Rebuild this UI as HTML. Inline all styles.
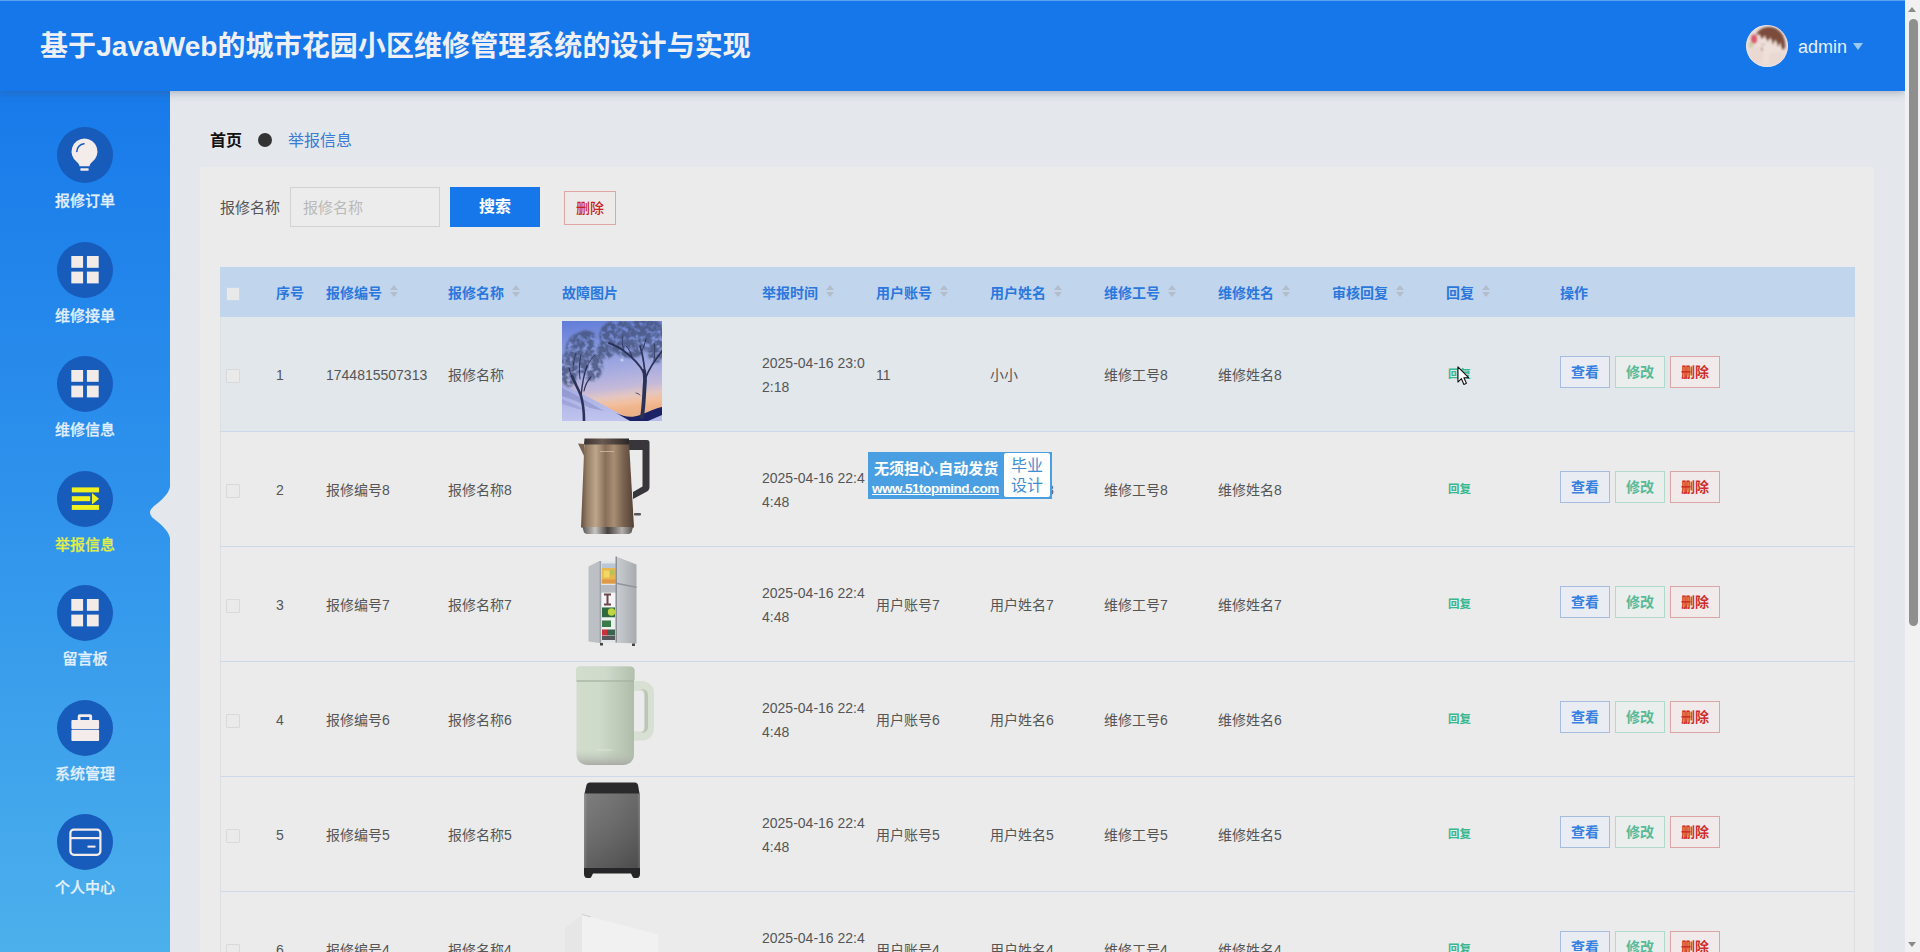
<!DOCTYPE html>
<html lang="zh-CN">
<head>
<meta charset="utf-8">
<title>基于JavaWeb的城市花园小区维修管理系统的设计与实现</title>
<style>
*{box-sizing:border-box;margin:0;padding:0}
html,body{width:1920px;height:952px;overflow:hidden}
body{position:relative;background:#e4e8ed;font-family:"Liberation Sans","Noto Sans CJK SC",sans-serif;color:#555;font-size:14px}
.abs{position:absolute}
#hdr{position:absolute;left:0;top:0;width:1905px;height:91px;background:#1677ea;box-shadow:0 2px 8px rgba(60,80,110,.35),inset 0 1px 0 #5a9ff0;z-index:5}
#hdr .title{position:absolute;left:40px;top:28px;font-size:28px;line-height:38px;font-weight:700;color:#eef0f6;white-space:nowrap;letter-spacing:.070px}
#hdr .avatar{position:absolute;left:1746px;top:25px;width:42px;height:42px;border-radius:50%;overflow:hidden}
#hdr .avatar svg{display:block}
#hdr .uname{position:absolute;left:1798px;top:34px;font-size:18px;line-height:26px;color:#e6f0ff}
#hdr .caret{position:absolute;left:1853px;top:43px;width:0;height:0;border-left:5px solid transparent;border-right:5px solid transparent;border-top:7px solid #9cc8f8}
#side{position:absolute;left:0;top:90px;width:170px;height:862px;background:linear-gradient(180deg,#187aea 0%,#3094ec 50%,#4cb0ec 100%);z-index:2}
.mi{position:absolute;left:0;width:170px;height:114px;text-align:center}
.mi .ic{position:absolute;left:57px;top:0;width:56px;height:56px;border-radius:50%;background:#175bbb}
.mi .ic svg{position:absolute;left:0;top:0}
.mi .lb{position:absolute;left:0;width:170px;top:63px;font-size:15px;line-height:22px;color:#e2f0fe;font-weight:500;-webkit-text-stroke:.250px #e2f0fe}
.mi.act .lb{color:#e2ee48;-webkit-text-stroke-color:#e2ee48}
#side .notch{position:absolute;left:146px;top:397px}
#sb{position:absolute;left:1905px;top:0;width:15px;height:952px;background:#f1f1f1;z-index:9}
#sb .th{position:absolute;left:3.500px;top:19px;width:9px;height:607px;background:#8f8f8f;border-radius:4.500px}
#sb .up{position:absolute;left:3px;top:7px;width:0;height:0;border-left:4.500px solid transparent;border-right:4.500px solid transparent;border-bottom:5px solid #8a8a8a}
#sb .dn{position:absolute;left:3px;top:942px;width:0;height:0;border-left:4.500px solid transparent;border-right:4.500px solid transparent;border-top:5px solid #8a8a8a}
.bc{position:absolute;top:129px;font-size:16px;line-height:24px;white-space:nowrap}
#panel{position:absolute;left:200px;top:167px;width:1674px;height:800px;background:#ebebeb}
.flabel{position:absolute;left:20px;top:29px;font-size:15px;line-height:24px;color:#555}
.finput{position:absolute;left:90px;top:20px;width:150px;height:40px;border:1px solid #d2d2d2;background:#ececec}
.finput span{position:absolute;left:12px;top:8px;font-size:15px;line-height:24px;color:#b9b9b9}
.fsearch{position:absolute;left:250px;top:20px;width:90px;height:40px;background:#1677ea;color:#fff;font-size:16px;font-weight:700;text-align:center;line-height:40px}
.fdel{position:absolute;left:364px;top:24px;width:52px;height:34px;border:1px solid #e0a6a6;background:#efeaea;color:#c81e1e;font-size:14px;font-weight:500;text-align:center;line-height:32px}
.thead{position:absolute;left:20px;top:100px;width:1635px;height:50px;background:#c1d5ed}
.thead .th{position:absolute;top:1px;line-height:50px;font-size:14px;font-weight:700;color:#2b78dd;white-space:nowrap}
.sc{position:relative;display:inline-block;width:10px;height:14px;margin-left:8px;vertical-align:middle;top:-3px}
.sc b{position:absolute;left:0;width:0;height:0;border-left:4.500px solid transparent;border-right:4.500px solid transparent}
.sc .u{top:1px;border-bottom:5px solid #b4bdca}
.sc .d{top:8px;border-top:5px solid #b4bdca}
.cb{position:absolute;width:14px;height:14px;border:1px solid #d9d9d9;background:#eaeaea;border-radius:1px}
.hcb{border-color:#c6d8ee;background:#e9e9e9}
.tr{position:absolute;left:20px;width:1635px;height:115px;border-bottom:1px solid #cdd8e8;box-shadow:inset 1px 0 0 #dedfe2,inset -1px 0 0 #dedfe2;background:#ebebeb}
.tr.hov{background:#e2e7ec}
.td{position:absolute;top:1px;height:114px;line-height:114px;font-size:14px;color:#555;white-space:nowrap}
.td.t2{line-height:24px;padding-top:33px}
.pic{position:absolute;left:342px;top:4px;width:100px;height:100px}
.pic svg{display:block}
.rp{position:absolute;left:1228px;top:48px;font-size:11.500px;line-height:18px;color:#3ab78e;font-weight:700}
.ob{position:absolute;top:39px;width:50px;height:32px;border:1px solid;font-size:14px;font-weight:700;text-align:center;line-height:30px}
.b1{left:1340px;color:#3780e0;border-color:#a6bcde;background:#e9ecf2}
.b2{left:1395px;color:#57ba99;border-color:#b3d9ca;background:#eaeeec}
.b3{left:1450px;color:#cf2e2e;border-color:#dba5a5;background:#f0eaea}
#wm{position:absolute;left:868px;top:452px;width:184px;height:47px;background:#4a9fe2;z-index:20;color:#fff;font-weight:700}
#wm .l1{position:absolute;left:6px;top:6.500px;font-size:15px;line-height:20px;white-space:nowrap}
#wm .l2{position:absolute;left:4px;top:27.500px;font-size:13.500px;letter-spacing:-0.450px;line-height:18px;white-space:nowrap;text-decoration:underline}
#wm .wb{position:absolute;left:136px;top:1px;width:46px;height:44px;background:#fff;border-radius:2px;color:#3f8ecf;font-weight:400;font-size:16px;line-height:20.500px;text-align:center;padding-top:2.500px}
#cur{position:absolute;left:1456.500px;top:366px;z-index:30}
</style>
</head>
<body>
<div id="hdr">
  <div class="title">基于JavaWeb的城市花园小区维修管理系统的设计与实现</div>
  <div class="avatar"><svg width="42" height="42" viewBox="0 0 42 42"><defs><filter id="ab" x="-20%" y="-20%" width="140%" height="140%"><feGaussianBlur stdDeviation="0.900"/></filter></defs><rect width="42" height="42" fill="#ecdcd8"/><g filter="url(#ab)"><ellipse cx="22" cy="27" rx="13" ry="12" fill="#efe0da"/><ellipse cx="11" cy="31" rx="7" ry="9" fill="#ecd8d2"/><ellipse cx="31" cy="34" rx="9" ry="7" fill="#ead8d2"/><path d="M10 10C13 2 24 0 31 4C37 8 40 15 39 23L36 25L34.500 17L32 22L29.500 14L27 20L24.500 12L21.500 17L19 10L16 14L13.500 9Z" fill="#7c4c3a"/><ellipse cx="8" cy="14" rx="3" ry="4.500" fill="#d9566a"/><ellipse cx="5" cy="20" rx="2" ry="3" fill="#b8c48a" opacity=".7"/><path d="M15.500 22l.8 4" stroke="#8a7a7a" stroke-width="1.200"/><path d="M15 19.500h4" stroke="#9a8a88" stroke-width=".8"/></g><circle cx="21" cy="21" r="20.600" fill="none" stroke="#e8eefc" stroke-width=".8" opacity=".7"/></svg>
</div>
  <div class="uname">admin</div>
  <div class="caret"></div>
</div>
<div id="side">
  <div class="mi" style="top:37.0px"><div class="ic"><svg width="56" height="56" viewBox="0 0 56 56"><path d="M27.5 11.5a13 13 0 0 0-7.6 23.5c1.6 1.3 2.3 2.6 2.6 4.2h10c.3-1.600 1-2.900 2.600-4.200A13 13 0 0 0 27.500 11.500z" fill="#f3ecea"/><rect x="23.300" y="41.200" width="8.400" height="2.500" rx=".8" fill="#f3ecea"/><path d="M19.800 24.500a8 8 0 0 1 7.200-7.700" fill="none" stroke="#175bbb" stroke-width="1.600" stroke-linecap="round"/></svg></div><div class="lb">报修订单</div></div>
  <div class="mi" style="top:151.5px"><div class="ic"><svg width="56" height="56" viewBox="0 0 56 56"><g fill="#f3ebe8"><rect x="14.300" y="14" width="11.800" height="11.800"/><rect x="29.900" y="14" width="11.800" height="11.800"/><rect x="14.300" y="29.600" width="11.800" height="11.800"/><rect x="29.900" y="29.600" width="11.800" height="11.800"/></g></svg></div><div class="lb">维修接单</div></div>
  <div class="mi" style="top:266.0px"><div class="ic"><svg width="56" height="56" viewBox="0 0 56 56"><g fill="#f3ebe8"><rect x="14.300" y="14" width="11.800" height="11.800"/><rect x="29.900" y="14" width="11.800" height="11.800"/><rect x="14.300" y="29.600" width="11.800" height="11.800"/><rect x="29.900" y="29.600" width="11.800" height="11.800"/></g></svg></div><div class="lb">维修信息</div></div>
  <div class="mi act" style="top:380.5px"><div class="ic"><svg width="56" height="56" viewBox="0 0 56 56"><g fill="#f0f01e"><rect x="14.800" y="16.400" width="27.300" height="5"/><rect x="14.800" y="25.200" width="18.400" height="5"/><rect x="14.800" y="34" width="27.300" height="4.900"/><path d="M35 22L42 27.700L35 33.400z"/></g></svg></div><div class="lb">举报信息</div></div>
  <div class="mi" style="top:495.0px"><div class="ic"><svg width="56" height="56" viewBox="0 0 56 56"><g fill="#f3ebe8"><rect x="14.300" y="14" width="11.800" height="11.800"/><rect x="29.900" y="14" width="11.800" height="11.800"/><rect x="14.300" y="29.600" width="11.800" height="11.800"/><rect x="29.900" y="29.600" width="11.800" height="11.800"/></g></svg></div><div class="lb">留言板</div></div>
  <div class="mi" style="top:609.5px"><div class="ic"><svg width="56" height="56" viewBox="0 0 56 56"><path d="M20.700 20.500v-4.200a2 2 0 0 1 2-2h10.400a2 2 0 0 1 2 2v4.200h-2.800v-3.400h-8.800v3.400z" fill="#f3ecea"/><rect x="14.400" y="20" width="27.700" height="8.900" rx="1" fill="#f3ecea"/><rect x="14.400" y="29.800" width="27.700" height="11.200" rx="1" fill="#f3ecea"/></svg></div><div class="lb">系统管理</div></div>
  <div class="mi" style="top:724.0px"><div class="ic"><svg width="56" height="56" viewBox="0 0 56 56"><rect x="13.400" y="15.600" width="30" height="25.200" rx="3.500" fill="none" stroke="#f3ecea" stroke-width="2.200"/><rect x="13.400" y="23" width="30" height="2.200" fill="#f3ecea"/><rect x="30.500" y="31.600" width="8" height="2" fill="#f3ecea"/></svg></div><div class="lb">个人中心</div></div>
  <svg class="notch" width="24" height="51" viewBox="0 0 24 51"><path d="M24 0C22.500 6.500 18 10.500 12.500 15.500C9 18.500 4 21.500 4 25.500C4 29.500 9 32.500 12.500 35.500C18 40.500 22.500 44.500 24 51z" fill="#e4e8ed"/></svg>
</div>
<div id="sb"><div class="up"></div><div class="th"></div><div class="dn"></div></div>
<div class="bc" style="left:210px;font-weight:700;color:#111">首页</div>
<div class="abs" style="left:258px;top:133px;width:14px;height:14px;border-radius:50%;background:#333"></div>
<div class="bc" style="left:288px;color:#3a7bd5">举报信息</div>
<div id="panel">
  <div class="flabel">报修名称</div>
  <div class="finput"><span>报修名称</span></div>
  <div class="fsearch">搜索</div>
  <div class="fdel">删除</div>
  <div class="thead">
    <div class="cb hcb" style="left:6px;top:20px"></div>
    <div class="th" style="left:56px">序号</div>
    <div class="th" style="left:106px">报修编号<i class="sc"><b class="u"></b><b class="d"></b></i></div>
    <div class="th" style="left:228px">报修名称<i class="sc"><b class="u"></b><b class="d"></b></i></div>
    <div class="th" style="left:342px">故障图片</div>
    <div class="th" style="left:542px">举报时间<i class="sc"><b class="u"></b><b class="d"></b></i></div>
    <div class="th" style="left:656px">用户账号<i class="sc"><b class="u"></b><b class="d"></b></i></div>
    <div class="th" style="left:770px">用户姓名<i class="sc"><b class="u"></b><b class="d"></b></i></div>
    <div class="th" style="left:884px">维修工号<i class="sc"><b class="u"></b><b class="d"></b></i></div>
    <div class="th" style="left:998px">维修姓名<i class="sc"><b class="u"></b><b class="d"></b></i></div>
    <div class="th" style="left:1112px">审核回复<i class="sc"><b class="u"></b><b class="d"></b></i></div>
    <div class="th" style="left:1226px">回复<i class="sc"><b class="u"></b><b class="d"></b></i></div>
    <div class="th" style="left:1340px">操作</div>
  </div>
  <div class="tr hov" style="top:150px">
    <div class="cb" style="left:6px;top:52px"></div>
    <div class="td" style="left:56px">1</div>
    <div class="td" style="left:106px">1744815507313</div>
    <div class="td" style="left:228px">报修名称</div>
    <div class="pic"><svg width="100" height="100" viewBox="0 0 100 100"><defs><linearGradient id="sky" x1="0" y1="0" x2="0.120" y2="1"><stop offset="0" stop-color="#607cd8"/><stop offset="0.350" stop-color="#8c9ce0"/><stop offset="0.560" stop-color="#a8ade0"/><stop offset="0.720" stop-color="#c4b9da"/><stop offset="0.810" stop-color="#e4c6c0"/><stop offset="0.880" stop-color="#f2c0a0"/><stop offset="0.940" stop-color="#f0b48a"/><stop offset="1" stop-color="#eab088"/></linearGradient><linearGradient id="snow" x1="0" y1="0" x2="0" y2="1"><stop offset="0" stop-color="#a4aae0"/><stop offset="1" stop-color="#c0c4ee"/></linearGradient><filter id="bl" x="-20%" y="-20%" width="140%" height="140%"><feGaussianBlur stdDeviation="1.300" result="b"/><feTurbulence type="fractalNoise" baseFrequency="0.190" numOctaves="2" seed="11" result="n"/><feColorMatrix in="n" type="matrix" values="0 0 0 0 0 0 0 0 0 0 0 0 0 0 0 0 0 0 3 -0.700" result="na"/><feComposite in="b" in2="na" operator="in"/></filter><filter id="bs" x="-20%" y="-20%" width="140%" height="140%"><feGaussianBlur stdDeviation="0.600"/></filter><clipPath id="tc"><rect width="100" height="100"/></clipPath></defs><g clip-path="url(#tc)"><rect width="100" height="100" fill="url(#sky)"/><path d="M0 63L12 69 30 78 45 86 58 93 68 100H0z" fill="url(#snow)"/><path d="M0 67l14 7 16 9 12 7-14-3-14-7-14-5z" fill="#7f88c4" opacity=".5" filter="url(#bs)"/><path d="M0 78l12 5 14 7-10-2-16-5z" fill="#8a92cc" opacity=".45" filter="url(#bs)"/><path d="M54 92c8 4 16 5 24 2 8-3 16-7 22-8v14H68z" fill="#1b2266"/><path d="M86 100l14-6v6z" fill="#b7bbea"/><g filter="url(#bl)" fill="#44527c" opacity=".8"><ellipse cx="18" cy="32" rx="15" ry="20"/><ellipse cx="30" cy="44" rx="11" ry="16"/><ellipse cx="7" cy="48" rx="9" ry="18"/><ellipse cx="24" cy="17" rx="10" ry="8"/><ellipse cx="56" cy="14" rx="19" ry="15"/><ellipse cx="82" cy="11" rx="20" ry="14"/><ellipse cx="68" cy="27" rx="16" ry="10"/><ellipse cx="94" cy="28" rx="9" ry="14"/><ellipse cx="44" cy="28" rx="9" ry="10"/></g><g fill="none" stroke="#2b3258" stroke-linecap="round" filter="url(#bs)"><path d="M22 100c0-9-1-18-3-25-2-6-6-12-9-20" stroke-width="2.600"/><path d="M19 75c1-10 2-20 6-30" stroke-width="1.400"/><path d="M22 70c1-5 3-10 7-14" stroke-width="1.100"/><path d="M14 62c-3-4-6-9-7-15" stroke-width="1"/><path d="M18 58c-1-8-1-16 1-24" stroke-width="1"/><path d="M11 50c0-6 1-12 3-18" stroke-width=".8"/><path d="M25 46c2-5 5-9 8-12" stroke-width=".8"/><path d="M80 96c2-12 2-24 3-36 0-4 0-7-1-10" stroke-width="3.800"/><path d="M82 52c-4-8-12-16-20-22-5-4-10-6-15-8" stroke-width="1.900"/><path d="M83 52c-1-10-2-18-5-27" stroke-width="1.700"/><path d="M84 56c3-8 9-17 16-26" stroke-width="1.700"/><path d="M70 36c-1-4-3-8-6-11" stroke-width="1"/><path d="M79 32c2-5 4-9 5-14" stroke-width="1"/><path d="M62 30c-2-5-2-10-1-15" stroke-width=".8"/><path d="M92 40c1-6 1-12 0-18" stroke-width=".8"/><path d="M78 74c-1-1-3-2-4-2" stroke-width=".8"/></g><circle cx="60" cy="39" r="1.600" fill="#e8ecff" opacity=".6" filter="url(#bs)"/></g></svg></div>
    <div class="td t2" style="left:542px">2025-04-16 23:0<br>2:18</div>
    <div class="td" style="left:656px">11</div>
    <div class="td" style="left:770px">小小</div>
    <div class="td" style="left:884px">维修工号8</div>
    <div class="td" style="left:998px">维修姓名8</div>
    <div class="rp">回复</div>
    <div class="ob b1">查看</div><div class="ob b2">修改</div><div class="ob b3">删除</div>
  </div>
  <div class="tr" style="top:265px">
    <div class="cb" style="left:6px;top:52px"></div>
    <div class="td" style="left:56px">2</div>
    <div class="td" style="left:106px">报修编号8</div>
    <div class="td" style="left:228px">报修名称8</div>
    <div class="pic"><svg width="100" height="100" viewBox="0 0 100 100"><defs><linearGradient id="kb" x1="0" y1="0" x2="1" y2="0"><stop offset="0" stop-color="#66503f"/><stop offset="0.120" stop-color="#978068"/><stop offset="0.280" stop-color="#bea68c"/><stop offset="0.460" stop-color="#886e58"/><stop offset="0.620" stop-color="#a88e74"/><stop offset="0.800" stop-color="#7a624e"/><stop offset="1" stop-color="#524036"/></linearGradient><linearGradient id="kl" x1="0" y1="0" x2="1" y2="0"><stop offset="0" stop-color="#3a3230"/><stop offset="0.400" stop-color="#6a5a50"/><stop offset="1" stop-color="#2c2828"/></linearGradient><linearGradient id="kc" x1="0" y1="0" x2="1" y2="0"><stop offset="0" stop-color="#5a5654"/><stop offset="0.250" stop-color="#c8c6c4"/><stop offset="0.500" stop-color="#46403e"/><stop offset="0.780" stop-color="#b4b0ae"/><stop offset="1" stop-color="#54504e"/></linearGradient></defs><path d="M66 4h19a2.500 2.500 0 0 1 2.500 2.500V51c0 2-1 3.500-2.500 4.500L71 63v-7l9.500-5.500V14H66z" fill="#38363a"/><path d="M16 7.500l6 .5 1 14z" fill="#7d6250"/><path d="M22.500 6h44.500l5 85.500H19z" fill="url(#kb)"/><path d="M22.500 2.500h44.500v6H22z" fill="url(#kl)"/><path d="M20.500 91h50.500l-1.500 5.500a4 4 0 0 1-3 1.500H25a4 4 0 0 1-3-1.500z" fill="url(#kc)"/><rect x="72" y="77" width="7" height="2.600" rx="1" fill="#5a5656"/><rect x="38" y="15" width="14" height="1" fill="#dcc4a8" opacity=".7"/></svg></div>
    <div class="td t2" style="left:542px">2025-04-16 22:4<br>4:48</div>
    <div class="td" style="left:656px">用户账号8</div>
    <div class="td" style="left:770px">用户姓名8</div>
    <div class="td" style="left:884px">维修工号8</div>
    <div class="td" style="left:998px">维修姓名8</div>
    <div class="rp">回复</div>
    <div class="ob b1">查看</div><div class="ob b2">修改</div><div class="ob b3">删除</div>
  </div>
  <div class="tr" style="top:380px">
    <div class="cb" style="left:6px;top:52px"></div>
    <div class="td" style="left:56px">3</div>
    <div class="td" style="left:106px">报修编号7</div>
    <div class="td" style="left:228px">报修名称7</div>
    <div class="pic"><svg width="100" height="100" viewBox="0 0 100 100"><defs><linearGradient id="fd" x1="0" y1="0" x2="1" y2="0"><stop offset="0" stop-color="#c9ccd0"/><stop offset="0.500" stop-color="#b9bcc1"/><stop offset="1" stop-color="#a7abb0"/></linearGradient><filter id="fb" x="-10%" y="-10%" width="120%" height="120%"><feGaussianBlur stdDeviation="0.450"/></filter></defs><path d="M26.500 15.500l10.800-5.500v82l-10.800-1.500z" fill="#bcc0c5"/><path d="M37.300 10h17.500v82H37.300z" fill="#e2e6e9"/><rect x="37.300" y="10" width="1.800" height="82" fill="#9da2a8"/><g filter="url(#fb)"><rect x="39.800" y="12.500" width="14" height="4.500" fill="#b9c6d6"/><rect x="39.800" y="17" width="14" height="15.500" fill="#e6b850"/><rect x="41.500" y="19.500" width="6" height="7" fill="#f2d862"/><rect x="48" y="19" width="4.500" height="5" fill="#b9c25a"/><rect x="39.800" y="28.500" width="14" height="4" fill="#e09848"/><rect x="39.100" y="34" width="16" height="7.500" fill="#b6bbc2"/><rect x="40" y="42" width="13" height="14" fill="#f4f4f6"/><path d="M42 42.500h7v2h-2.500v8H49v2h-7v-2h2.500v-8H42z" fill="#6a454a"/><rect x="40" y="56.500" width="13" height="10" fill="#2f6a3a"/><circle cx="49.500" cy="61" r="3.700" fill="#c0d640"/><rect x="40" y="66.500" width="13" height="3" fill="#f2f4f4"/><rect x="40" y="69.500" width="9" height="6.500" fill="#3a7a48"/><rect x="49" y="69.500" width="4" height="6.500" fill="#e9eeee"/><rect x="40" y="76" width="13" height="2.500" fill="#f0f2f2"/><rect x="40" y="78.500" width="5" height="6" fill="#c8303e"/><rect x="45" y="78.500" width="8" height="6" fill="#3a6450"/><rect x="40" y="85" width="13" height="4" fill="#55595c"/></g><path d="M54 5.500l20.500 8v79l-20.500-.8z" fill="url(#fd)"/><path d="M54 31.500l20.500 4v1.600l-20.500-4z" fill="#8f949a"/><rect x="53.500" y="5.500" width="1.500" height="86" fill="#8c9096"/><rect x="38" y="92" width="3" height="2.500" fill="#444"/><rect x="70" y="92.500" width="3" height="2.500" fill="#444"/></svg></div>
    <div class="td t2" style="left:542px">2025-04-16 22:4<br>4:48</div>
    <div class="td" style="left:656px">用户账号7</div>
    <div class="td" style="left:770px">用户姓名7</div>
    <div class="td" style="left:884px">维修工号7</div>
    <div class="td" style="left:998px">维修姓名7</div>
    <div class="rp">回复</div>
    <div class="ob b1">查看</div><div class="ob b2">修改</div><div class="ob b3">删除</div>
  </div>
  <div class="tr" style="top:495px">
    <div class="cb" style="left:6px;top:52px"></div>
    <div class="td" style="left:56px">4</div>
    <div class="td" style="left:106px">报修编号6</div>
    <div class="td" style="left:228px">报修名称6</div>
    <div class="pic"><svg width="100" height="100" viewBox="0 0 100 100"><defs><linearGradient id="cb" x1="0" y1="0" x2="1" y2="0"><stop offset="0" stop-color="#d1dccd"/><stop offset="0.400" stop-color="#cedaca"/><stop offset="0.750" stop-color="#bccab7"/><stop offset="1" stop-color="#aebca9"/></linearGradient><linearGradient id="cbase" x1="0" y1="0" x2="0" y2="1"><stop offset="0" stop-color="#c0cab9" stop-opacity="0"/><stop offset="1" stop-color="#a9aaa6"/></linearGradient><linearGradient id="clid" x1="0" y1="0" x2="1" y2="0"><stop offset="0" stop-color="#d2ddce"/><stop offset="0.500" stop-color="#cfdacb"/><stop offset="0.850" stop-color="#bac8b5"/><stop offset="1" stop-color="#b2c0ad"/></linearGradient></defs><path d="M71 15h8.500c7.500 0 12.500 5 12.500 12v35c0 8-5 12.500-12 12.500H71v-9h6.500c3 0 5-2 5-5V30c0-3-2-5-5-5H71z" fill="#d8e0d3"/><path d="M82.500 28v34c0 3-2 5-5 5h2c4 0 6.500-2.500 6.500-6V29c0-3.500-2.500-6-6.500-6h-2c3 0 5 2 5 5z" fill="#bcc6b6"/><path d="M14.500 12h57.500v76c0 7-5 11-12 11H26.500c-7 0-12-4-12-11z" fill="url(#cb)"/><path d="M14.500 84h57.500v4c0 7-5 11-12 11H26.500c-7 0-12-4-12-11z" fill="url(#cbase)"/><path d="M14 4c0-2 2-3.500 4-3.500h50c2 0 4.500 1.500 4.500 3.500v9c0 1.500-1.500 2.500-3 2.500H17c-1.500 0-3-1-3-2.500z" fill="#ccd7c7"/><path d="M14 4c0-2 2-3.500 4-3.500h50c2 0 4.500 1.500 4.500 3.500v9c0 1.500-1.500 2.500-3 2.500H17c-1.500 0-3-1-3-2.500z" fill="url(#clid)"/><rect x="14.500" y="14.300" width="57.500" height="1.400" fill="#9fae9a" opacity=".8"/><rect x="34" y="83.500" width="16" height="1" fill="#dfe6da" opacity=".8"/></svg></div>
    <div class="td t2" style="left:542px">2025-04-16 22:4<br>4:48</div>
    <div class="td" style="left:656px">用户账号6</div>
    <div class="td" style="left:770px">用户姓名6</div>
    <div class="td" style="left:884px">维修工号6</div>
    <div class="td" style="left:998px">维修姓名6</div>
    <div class="rp">回复</div>
    <div class="ob b1">查看</div><div class="ob b2">修改</div><div class="ob b3">删除</div>
  </div>
  <div class="tr" style="top:610px">
    <div class="cb" style="left:6px;top:52px"></div>
    <div class="td" style="left:56px">5</div>
    <div class="td" style="left:106px">报修编号5</div>
    <div class="td" style="left:228px">报修名称5</div>
    <div class="pic"><svg width="100" height="100" viewBox="0 0 100 100"><defs><linearGradient id="wb" x1="0" y1="0" x2="1" y2="0"><stop offset="0" stop-color="#8a8a8a"/><stop offset="0.060" stop-color="#6e6e6e"/><stop offset="0.500" stop-color="#656565"/><stop offset="0.950" stop-color="#595959"/><stop offset="1" stop-color="#777"/></linearGradient><linearGradient id="wv" x1="0" y1="0" x2="0" y2="1"><stop offset="0" stop-color="#fff" stop-opacity=".1"/><stop offset="1" stop-color="#000" stop-opacity=".15"/></linearGradient></defs><path d="M28 1.500h45c1.500 0 2.500 1 3 2.500l1.800 10H22.200L24.500 4c.5-1.500 1.500-2.500 3.500-2.500z" fill="#2a2a2c"/><rect x="22" y="12.500" width="56" height="76" fill="url(#wb)"/><rect x="22" y="12.500" width="56" height="76" fill="url(#wv)"/><path d="M22 87h56v6c0 2-1 4-3 4h-2.500c-1 0-1.500-.5-2-1.500l-1.500-3h-38l-1.500 3c-.5 1-1 1.500-2 1.500H25c-2 0-3-2-3-4z" fill="#262628"/></svg></div>
    <div class="td t2" style="left:542px">2025-04-16 22:4<br>4:48</div>
    <div class="td" style="left:656px">用户账号5</div>
    <div class="td" style="left:770px">用户姓名5</div>
    <div class="td" style="left:884px">维修工号5</div>
    <div class="td" style="left:998px">维修姓名5</div>
    <div class="rp">回复</div>
    <div class="ob b1">查看</div><div class="ob b2">修改</div><div class="ob b3">删除</div>
  </div>
  <div class="tr" style="top:725px">
    <div class="cb" style="left:6px;top:52px"></div>
    <div class="td" style="left:56px">6</div>
    <div class="td" style="left:106px">报修编号4</div>
    <div class="td" style="left:228px">报修名称4</div>
    <div class="pic"><svg width="100" height="100" viewBox="0 0 100 100"><path d="M3 32L20 18.500 96 38.500V100H3z" fill="#f1f1f1"/><path d="M3 32L20 18.500V100H3z" fill="#e6e6e6"/><path d="M20 18.500l9 2.400" stroke="#cfcfcf" stroke-width="1" fill="none"/></svg></div>
    <div class="td t2" style="left:542px">2025-04-16 22:4<br>4:48</div>
    <div class="td" style="left:656px">用户账号4</div>
    <div class="td" style="left:770px">用户姓名4</div>
    <div class="td" style="left:884px">维修工号4</div>
    <div class="td" style="left:998px">维修姓名4</div>
    <div class="rp">回复</div>
    <div class="ob b1">查看</div><div class="ob b2">修改</div><div class="ob b3">删除</div>
  </div>
</div>
<div id="wm"><div class="l1">无须担心.自动发货</div><div class="l2">www.51topmind.com</div><div class="wb">毕业<br>设计</div></div>
<svg id="cur" width="12.900" height="20.200" viewBox="0 0 14 22"><path d="M1 1v16.500l3.800-3.700 2.700 6.300 2.700-1.200-2.700-6.100h5.300z" fill="#fff" stroke="#111" stroke-width="1.200" stroke-linejoin="round"/></svg>
</body>
</html>
